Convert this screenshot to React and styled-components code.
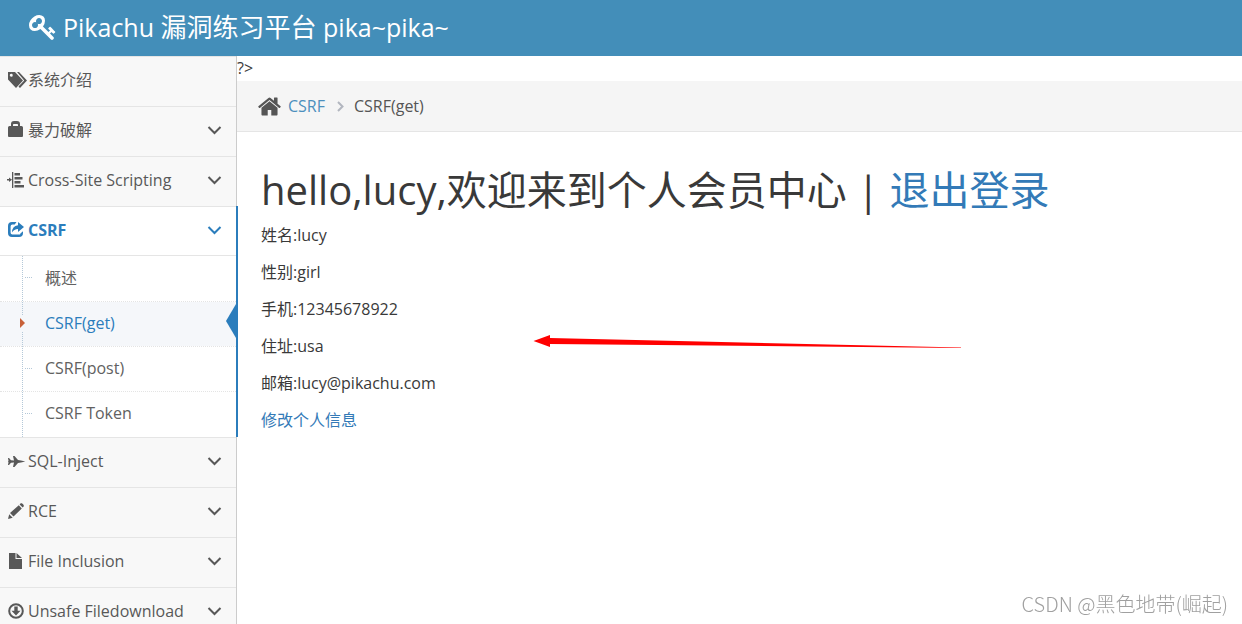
import React from "react";
import styled, { createGlobalStyle } from 'styled-components';

const GlobalStyle = createGlobalStyle`
    * { box-sizing: border-box; }
    body { margin: 0; background: #fff; color: #393939; font-family: "Open Sans", "Noto Sans CJK SC", sans-serif; font-size: 16px; line-height: 24px; }
    a { color: #337ab7; text-decoration: none; }
    svg { display: block; flex: none; }
`;

const Page = styled.div`
    display: flex; flex-direction: column; height: 100vh; overflow: hidden;
`;

const Navbar = styled.header`
    flex: none; height: 56px; padding: 0 29px 2px; display: flex; align-items: center; background: #438eb9;
`;

const Brand = styled.a`
    display: flex; align-items: center; gap: 6px; color: #fff; font-size: 25px; line-height: 36px;
    span { white-space: pre; }
    b { font-size: 26px; font-weight: 400; }
`;

const Container = styled.div`
    flex: 1; min-height: 0; display: flex;
`;

const Sidebar = styled.nav`
    flex: none; width: 237px; background: #f8f8f8; border-right: 1px solid #ccc;
    ul { list-style: none; margin: 0; padding: 0; }
`;

const MenuItem = styled.li`
    position: relative; border-top: 1px solid #e5e5e5;
    ${({ $open }) => $open && `
        background: #fff;
        &::after { content: ""; position: absolute; top: -1px; bottom: 0; right: -2px; width: 2px; background: #2b7dbc; }
    `}
`;

const MenuLink = styled.a`
    display: flex; align-items: center; height: ${({ $open }) => ($open ? 48 : 49)}px; padding: 0 14px 3px 7px;
    color: ${({ $open }) => ($open ? '#2b7dbc' : '#585858')};
    font-weight: ${({ $open }) => ($open ? 700 : 400)};
    span { flex: 1; margin-left: 1px; }
`;

const SubMenu = styled.ul`
    position: relative; border-top: 1px solid #e5e5e5;
    && { padding-bottom: 1px; }
    &::before { content: ""; position: absolute; z-index: 1; top: 0; bottom: 0; left: 22px; border-left: 1px dotted #b4c8d8; }
`;

const SubItem = styled.li`
    position: relative;
    & + & { border-top: 1px dotted #e4e4e4; }
    &::before { content: ""; position: absolute; top: 21px; left: 25px; width: 7px; border-top: 1px dotted #b4c8d8; display: ${({ $active }) => ($active ? 'none' : 'block')}; }
`;

const SubLink = styled.a`
    display: flex; align-items: center; height: 45px; padding: 0 0 2px 45px;
    li + li > & { height: 44px; }
    color: ${({ $active }) => ($active ? '#2b7dbc' : '#616161')};
    background: ${({ $active }) => ($active ? '#f5f7fa' : 'transparent')};
`;

const Caret = styled.i`
    position: absolute; z-index: 2; left: 18px; top: 13px; height: 16px; width: 8px; background: #f5f7fa;
    &::after { content: ""; position: absolute; left: 2px; top: 3px; border: solid transparent; border-width: 5px 0 5px 5px; border-left-color: #c86139; }
`;

const Notch = styled.i`
    position: absolute; right: 0; top: 2px; border: solid transparent; border-width: 17px 10px 17px 0; border-right-color: #2b7dbc;
`;

const Main = styled.main`
    flex: 1; min-width: 0;
`;

const Stray = styled.div`
    height: 25px;
`;

const Breadcrumb = styled.div`
    display: flex; align-items: center; height: 51px; padding-left: 20px;
    background: #f5f5f5; border-bottom: 1px solid #e5e5e5; color: #555;
    a { margin: 0 12px 0 6px; color: #4c8fbd; }
    span { margin-left: 10px; }
`;

const Content = styled.div`
    padding: 31px 24px;
    h1 { margin: 0 0 6px; font-size: 40px; line-height: 54px; font-weight: 400; }
    p { margin: 0 0 13px; }
`;

const Arrow = styled.svg`
    position: absolute; left: 533px; top: 334px;
`;

const Watermark = styled.div`
    position: fixed; right: 14px; bottom: 6px; color: #a0a0a0; font-family: "Noto Sans CJK SC", sans-serif; font-size: 20px; line-height: 28px; font-weight: 300;
`;

const icons = {
    tags: <>
        <path fillRule="evenodd" d="M1 1h7l8 8.500-7 7.500L1 8.500zM4.200 2.700a1.500 1.500 0 1 0 .1 3 1.500 1.500 0 0 0-.1-3z" />
        <path d="M10 1h2l8 8.500-7 7.500-1.500-1.500 5.700-6z" />
    </>,
    lock: <path fillRule="evenodd" d="M1 6.500Q1 5 2.500 5H4V3Q4 0 7 0h3q3 0 3 3v2h1.500Q16 5 16 6.500V15q0 1-1 1H2q-1 0-1-1zM6 5h5V3.800q0-.8-.8-.8H6.800Q6 3 6 3.800z" />,
    align: <path d="M0 8h2V6.500L5 8.700 2 11V9.400H0zM5 1h1.300v16H5zM7.500 2H13v2.500H7.500zm0 4h8v2.500h-8zm0 4h6v2.500h-6zm0 4H17v2.500H7.500z" />,
    share: <path d="M9.500 1H5Q1 1 1 5v7q0 4 4 4h7q4 0 4-4v-1.800l-2.600 2.200q0 1.200-1.400 1.200H5.400q-1.800 0-1.800-1.800V5.400q0-1.800 1.800-1.800h2.300zM11 1l6 5-6 5V8Q7 8 5 11.500 5 5 11 4.200z" />,
    plane: <path d="M1 6h1l2 2.300 3 .2L6 4h1.500l3.500 4 3 .5 4.300 1-4.300 1-3 .5-3.500 4H6l1-4.500-3 .2L2 13H1l.500-3L0.900 9.500 1.500 9z" />,
    pencil: <path d="M1 17l1.200-4.800 3.500 3.500zM3 11L11.800 3.200l3 3.200L6.500 14.600zM12.600 2.400L14 1q2.500.5 3 3l-1.300 1.400z" />,
    file: <path d="M2 1h6.500v6H15v10H2zM9.500 1L15 6H9.500z" />,
    download: <>
        <circle cx="9" cy="9" r="6.800" fill="none" stroke="currentColor" strokeWidth="2" />
        <path d="M7.300 4.500h3.400v4.300h2.800L9 13.500 4.500 8.800h2.800z" />
    </>,
};

const MenuIcon = ({ name }) => (
    <svg width="20" height="18" viewBox="0 0 20 18" fill="currentColor">{icons[name]}</svg>
);

const ArrowDown = () => (
    <svg width="15" height="10" viewBox="0 0 15 10" fill="none" stroke="currentColor" strokeWidth="2">
        <path d="M1.500 2l6 6 6-6" />
    </svg>
);

const menus = [
    { icon: 'tags', title: '系统介绍', leaf: true },
    { icon: 'lock', title: '暴力破解' },
    { icon: 'align', title: 'Cross-Site Scripting' },
    { icon: 'share', title: 'CSRF', children: ['概述', 'CSRF(get)', 'CSRF(post)', 'CSRF Token'] },
    { icon: 'plane', title: 'SQL-Inject' },
    { icon: 'pencil', title: 'RCE' },
    { icon: 'file', title: 'File Inclusion' },
    { icon: 'download', title: 'Unsafe Filedownload' },
];

const current = 'CSRF(get)';

const App = () => {

    return (
        <>
        <GlobalStyle />
        <Page>
            <Navbar>
                <Brand href="#">
                    <svg width="28" height="28" viewBox="0 0 1792 1792" fill="currentColor">
                        <path d="M832 512q0-80-56-136t-136-56-136 56-56 136q0 42 19 83-41-19-83-19-80 0-136 56t-56 136 56 136 136 56 136-56 56-136q0-42-19-83 41 19 83 19 80 0 136-56t56-136zm851 704q0 17-49 66t-66 49q-9 0-28.5-16t-36.5-33-38.5-40-24.5-26l-96 96 220 220q28 28 28 68 0 42-39 81t-81 39q-40 0-68-28l-671-671q-176 131-365 131-163 0-265.5-102.5t-102.5-265.5q0-160 95-313t248-248 313-95q163 0 265.5 102.5t102.5 265.5q0 189-131 365l355 355 96-96q-3-3-26-24.5t-40-38.5-33-36.5-16-28.5q0-17 49-66t66-49q13 0 23 10 6 6 46 44.5t82 79.5 86.5 86 73 78 28.5 41z" />
                    </svg>
                    <span>Pikachu <b>漏洞练习平台</b> pika~pika~</span>
                </Brand>
            </Navbar>
            <Container>
                <Sidebar>
                    <ul>
                        {menus.map(({ icon, title, leaf, children }) => (
                            <MenuItem key={title} $open={!!children}>
                                <MenuLink href="#" $open={!!children}>
                                    <MenuIcon name={icon} />
                                    <span>{title}</span>
                                    {!leaf && <ArrowDown />}
                                </MenuLink>
                                {children && (
                                    <SubMenu>
                                        {children.map((name) => (
                                            <SubItem key={name} $active={name === current}>
                                                <SubLink href="#" $active={name === current}>{name}</SubLink>
                                                {name === current && <><Caret /><Notch /></>}
                                            </SubItem>
                                        ))}
                                    </SubMenu>
                                )}
                            </MenuItem>
                        ))}
                    </ul>
                </Sidebar>
                <Main>
                    <Stray>?&gt;</Stray>
                    <Breadcrumb>
                        <svg width="25" height="25" viewBox="0 0 1792 1792" fill="currentColor">
                            <path d="M1472 992v480q0 26-19 45t-45 19h-384v-384h-256v384h-384q-26 0-45-19t-19-45v-480q0-1 .5-3t.5-3l575-474 575 474q1 2 1 6zm223-69l-62 74q-8 9-21 11h-3q-13 0-21-7l-692-577-692 577q-12 8-24 7-13-2-21-11l-62-74q-8-10-7-23.5t11-21.5l719-599q32-26 76-26t76 26l244 204v-195q0-14 9-23t23-9h192q14 0 23 9t9 23v408l219 182q10 8 11 21.5t-7 23.5z" />
                        </svg>
                        <a href="#">CSRF</a>
                        <svg width="7" height="11" viewBox="0 0 7 11" fill="none" stroke="#b2b6bf" strokeWidth="2">
                            <path d="M1 1l4.500 4.500L1 10" />
                        </svg>
                        <span>CSRF(get)</span>
                    </Breadcrumb>
                    <Content>
                        <h1>hello,lucy,欢迎来到个人会员中心 | <a href="#">退出登录</a></h1>
                        <p>姓名:lucy</p>
                        <p>性别:girl</p>
                        <p>手机:12345678922</p>
                        <p>住址:usa</p>
                        <p>邮箱:lucy@pikachu.com</p>
                        <a href="#">修改个人信息</a>
                    </Content>
                </Main>
            </Container>
            <Arrow width="430" height="16" viewBox="0 0 430 16" fill="#f00">
                <path d="M0.500 7L17 1v3L428 13.500v.5L17 10v3z" />
            </Arrow>
            <Watermark>CSDN @黑色地带(崛起)</Watermark>
        </Page>
        </>
    )
}

export default App;
